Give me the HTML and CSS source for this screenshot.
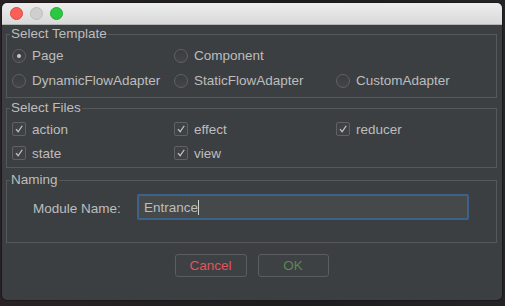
FILE: index.html
```html
<!DOCTYPE html>
<html lang="en">
<head>
  <meta charset="UTF-8" />
  <title>New Module</title>
  <link rel="stylesheet" href="styles.css">
</head>
<body>

  <div class="window">
    <div class="titlebar">
      <span class="light red"></span>
      <span class="light gray"></span>
      <span class="light green"></span>
    </div>

    <div class="content">
      <fieldset class="group">
        <legend>Select Template</legend>
        <div class="options radios">
          <label class="option"><span class="radio checked"></span>Page</label>
          <label class="option"><span class="radio"></span>Component</label>
          <span></span>
          <label class="option"><span class="radio"></span>DynamicFlowAdapter</label>
          <label class="option"><span class="radio"></span>StaticFlowAdapter</label>
          <label class="option"><span class="radio"></span>CustomAdapter</label>
        </div>
      </fieldset>

      <fieldset class="group files">
        <legend>Select Files</legend>
        <div class="options checks">
          <label class="option"><span class="check"><svg viewBox="0 0 14 14"><path d="M3.5 7.2 L6 10.2 L10.8 3.2"/></svg></span>action</label>
          <label class="option"><span class="check"><svg viewBox="0 0 14 14"><path d="M3.5 7.2 L6 10.2 L10.8 3.2"/></svg></span>effect</label>
          <label class="option"><span class="check"><svg viewBox="0 0 14 14"><path d="M3.5 7.2 L6 10.2 L10.8 3.2"/></svg></span>reducer</label>
          <label class="option"><span class="check"><svg viewBox="0 0 14 14"><path d="M3.5 7.2 L6 10.2 L10.8 3.2"/></svg></span>state</label>
          <label class="option"><span class="check"><svg viewBox="0 0 14 14"><path d="M3.5 7.2 L6 10.2 L10.8 3.2"/></svg></span>view</label>
        </div>
      </fieldset>

      <fieldset class="group naming">
        <legend>Naming</legend>
        <div class="name-row">
          <label for="module-name">Module Name:</label>
          <div class="field"><span id="module-name">Entrance</span><span class="caret"></span></div>
        </div>
      </fieldset>

      <div class="actions">
        <button class="btn cancel">Cancel</button>
        <button class="btn ok">OK</button>
      </div>
    </div>
  </div>

</body>
</html>
```

FILE: styles.css
```css
:root {
  --panel: #3c3f41;
  --text: #bdbdbd;
  --line: #56585a;
}

* {
  box-sizing: border-box;
}

body {
  margin: 0;
  height: 306px;
  background: linear-gradient(90deg, #2a2126, #1d1b1f 60%, #262328);
  font-family: "Liberation Sans", Arial, sans-serif;
  font-size: 13.5px;
  color: var(--text);
  padding: 3px 3px 0 2px;
  overflow: hidden;
}

.window {
  height: 297px;
  background: var(--panel);
  border-radius: 5px;
  overflow: hidden;
  box-shadow: 0 0 0 1px #1a1a1a;
}

.titlebar {
  height: 22px;
  background: linear-gradient(#ededed, #d9d9d9);
  border-bottom: 1px solid #b4b4b4;
  display: flex;
  align-items: center;
  gap: 7px;
  padding-left: 8px;
}

.light {
  width: 13px;
  height: 13px;
  border-radius: 50%;
}

.light.red { background: #fc5f57; border: 1px solid #e2463f; }
.light.gray { background: #cfcfcf; border: 1px solid #bdbdbd; }
.light.green { background: #2ac940; border: 1px solid #1fae33; }

.content {
  padding: 2px 5px 0 4px;
}

.group {
  margin: 0;
  padding: 2px 5px 4px;
  border: 1px solid var(--line);
  min-width: 0;
}

.group legend {
  margin-left: -2px;
  padding: 0 1px;
  line-height: 14px;
}

.files {
  margin-top: 3px;
  padding-top: 2px;
  padding-bottom: 2px;
}

.naming {
  margin-top: 5px;
  padding-top: 7px;
  padding-bottom: 22px;
}

.options {
  display: grid;
  grid-template-columns: 162px 162px 1fr;
}

.radios .option { height: 25px; }
.checks .option { height: 24px; }

.option {
  display: flex;
  align-items: center;
  gap: 6px;
  white-space: nowrap;
}

.radio {
  width: 14px;
  height: 14px;
  border-radius: 50%;
  border: 1px solid #5f6163;
  background: linear-gradient(#3a3c3e, #434648);
  display: flex;
  align-items: center;
  justify-content: center;
}

.radio.checked::after {
  content: "";
  width: 4px;
  height: 4px;
  border-radius: 50%;
  background: #c8c8c8;
}

.check {
  width: 14px;
  height: 14px;
  border-radius: 2px;
  border: 1px solid #5f6163;
  background: #3f4244;
  display: flex;
}

.check svg {
  width: 12px;
  height: 12px;
  fill: none;
  stroke: #c4c4c4;
  stroke-width: 1.5;
}

.name-row {
  display: flex;
  align-items: center;
  padding-left: 21px;
}

.name-row label {
  width: 104px;
  padding-top: 2px;
}

.field {
  width: 332px;
  height: 26px;
  background: #45494a;
  border: 2px solid #3c6289;
  border-radius: 2px;
  display: flex;
  align-items: center;
  padding-left: 5px;
}

.caret {
  width: 1px;
  height: 15px;
  background: #d0d0d0;
}

.actions {
  display: flex;
  justify-content: center;
  gap: 11px;
  margin-top: 11px;
}

.btn {
  width: 72px;
  height: 23px;
  border: 1px solid #5b5d5f;
  border-radius: 3px;
  background: #3e4143;
  font-family: "Liberation Sans", Arial, sans-serif;
  font-size: 13.5px;
  padding: 0;
}

.cancel { color: #e2535d; }
.ok { color: #5c8757; width: 71px; }
```
